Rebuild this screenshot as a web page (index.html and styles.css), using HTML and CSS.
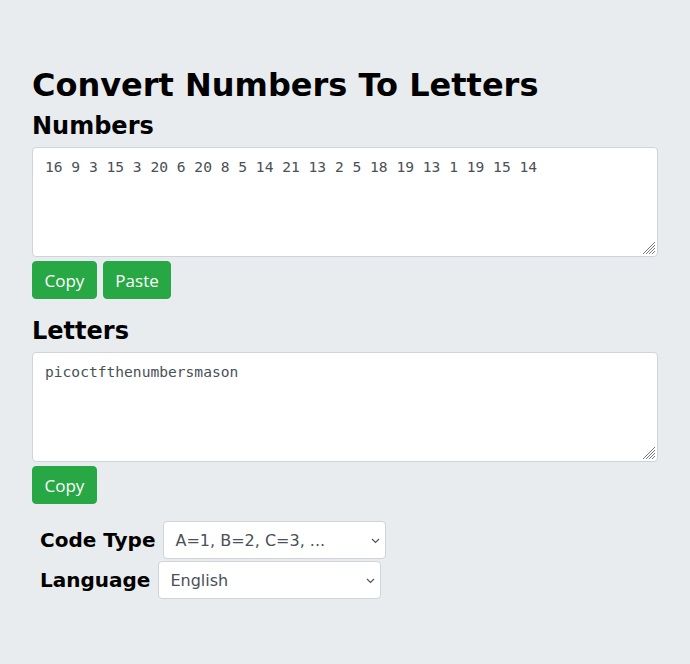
FILE: index.html
```html
<!DOCTYPE html>
<html lang="en">
<head>
<meta charset="utf-8">
<title>Convert Numbers To Letters</title>
<link rel="stylesheet" href="styles.css">
</head>
<body>
<main class="page">
  <h1 class="title">Convert Numbers To Letters</h1>
  <h2 class="section-title">Numbers</h2>
  <div class="field-wrap">
    <textarea class="field" spellcheck="false">16 9 3 15 3 20 6 20 8 5 14 21 13 2 5 18 19 13 1 19 15 14</textarea>
    <svg class="grip" width="14" height="14" viewBox="0 0 14 14" aria-hidden="true">
      <path d="M1 13 L13 1 M4 13 L13 4 M7 13 L13 7 M10 13 L13 10" stroke="#7a7a7a" stroke-width="1" fill="none"/>
    </svg>
  </div>
  <div class="actions">
    <button class="btn">Copy</button>
    <button class="btn">Paste</button>
  </div>
  <h2 class="section-title letters">Letters</h2>
  <div class="field-wrap">
    <textarea class="field" spellcheck="false">picoctfthenumbersmason</textarea>
    <svg class="grip" width="14" height="14" viewBox="0 0 14 14" aria-hidden="true">
      <path d="M1 13 L13 1 M4 13 L13 4 M7 13 L13 7 M10 13 L13 10" stroke="#7a7a7a" stroke-width="1" fill="none"/>
    </svg>
  </div>
  <div class="actions">
    <button class="btn">Copy</button>
  </div>
  <div class="options">
    <div class="option">
      <label class="option-label">Code Type</label>
      <div class="select-wrap">
        <select class="select">
          <option>A=1, B=2, C=3, ...</option>
        </select>
        <svg class="chevron" width="9" height="6" viewBox="0 0 9 6" aria-hidden="true">
          <path d="M1 1 L4.5 4.5 L8 1" stroke="#555" stroke-width="1.2" fill="none"/>
        </svg>
      </div>
    </div>
    <div class="option">
      <label class="option-label">Language</label>
      <div class="select-wrap">
        <select class="select">
          <option>English</option>
        </select>
        <svg class="chevron" width="9" height="6" viewBox="0 0 9 6" aria-hidden="true">
          <path d="M1 1 L4.5 4.5 L8 1" stroke="#555" stroke-width="1.2" fill="none"/>
        </svg>
      </div>
    </div>
  </div>
</main>
</body>
</html>
```
FILE: styles.css
```css
html, body {
  margin: 0;
  padding: 0;
  background: #e9ecef;
}
body {
  font-family: "DejaVu Sans", sans-serif;
  color: #000;
}
.page {
  padding: 66px 32px 40px 32px;
  display: flex;
  flex-direction: column;
}
.title {
  margin: 0;
  font-size: 32px;
  font-weight: bold;
  line-height: 38px;
}
.section-title {
  margin: 7px 0 6px 0;
  font-size: 24px;
  font-weight: bold;
  line-height: 30px;
}
.section-title.letters {
  margin-top: 17px;
}
.field-wrap {
  position: relative;
}
.field {
  display: block;
  box-sizing: border-box;
  width: 100%;
  height: 110px;
  margin: 0;
  padding: 9px 12px;
  border: 1px solid #ced4da;
  border-radius: 4px;
  background: #fff;
  color: #495057;
  font-family: "DejaVu Sans Mono", monospace;
  font-size: 14.6px;
  line-height: 20px;
  resize: none;
  outline: none;
}
.grip {
  position: absolute;
  right: 2px;
  bottom: 2px;
}
.actions {
  display: flex;
  gap: 6px;
  margin-top: 4px;
}
.btn {
  height: 38px;
  padding: 0 11.5px;
  border: 1px solid #28a745;
  border-radius: 4px;
  background: #28a745;
  color: #fff;
  font-family: "Open Sans", sans-serif;
  font-size: 17px;
  cursor: pointer;
}
.options {
  margin-top: 17px;
  padding-left: 8px;
  display: flex;
  flex-direction: column;
  gap: 2px;
}
.option {
  display: flex;
  align-items: center;
  gap: 8px;
}
.option-label {
  font-size: 20px;
  font-weight: bold;
}
.select-wrap {
  position: relative;
  display: flex;
}
.select {
  box-sizing: border-box;
  width: 223px;
  height: 38px;
  padding: 0 24px 0 11px;
  border: 1px solid #ced4da;
  border-radius: 4px;
  background: #fff;
  color: #495057;
  font-family: "DejaVu Sans", sans-serif;
  font-size: 16px;
  -webkit-appearance: none;
  appearance: none;
  outline: none;
}
.chevron {
  position: absolute;
  right: 6px;
  top: 17px;
  pointer-events: none;
}
```
